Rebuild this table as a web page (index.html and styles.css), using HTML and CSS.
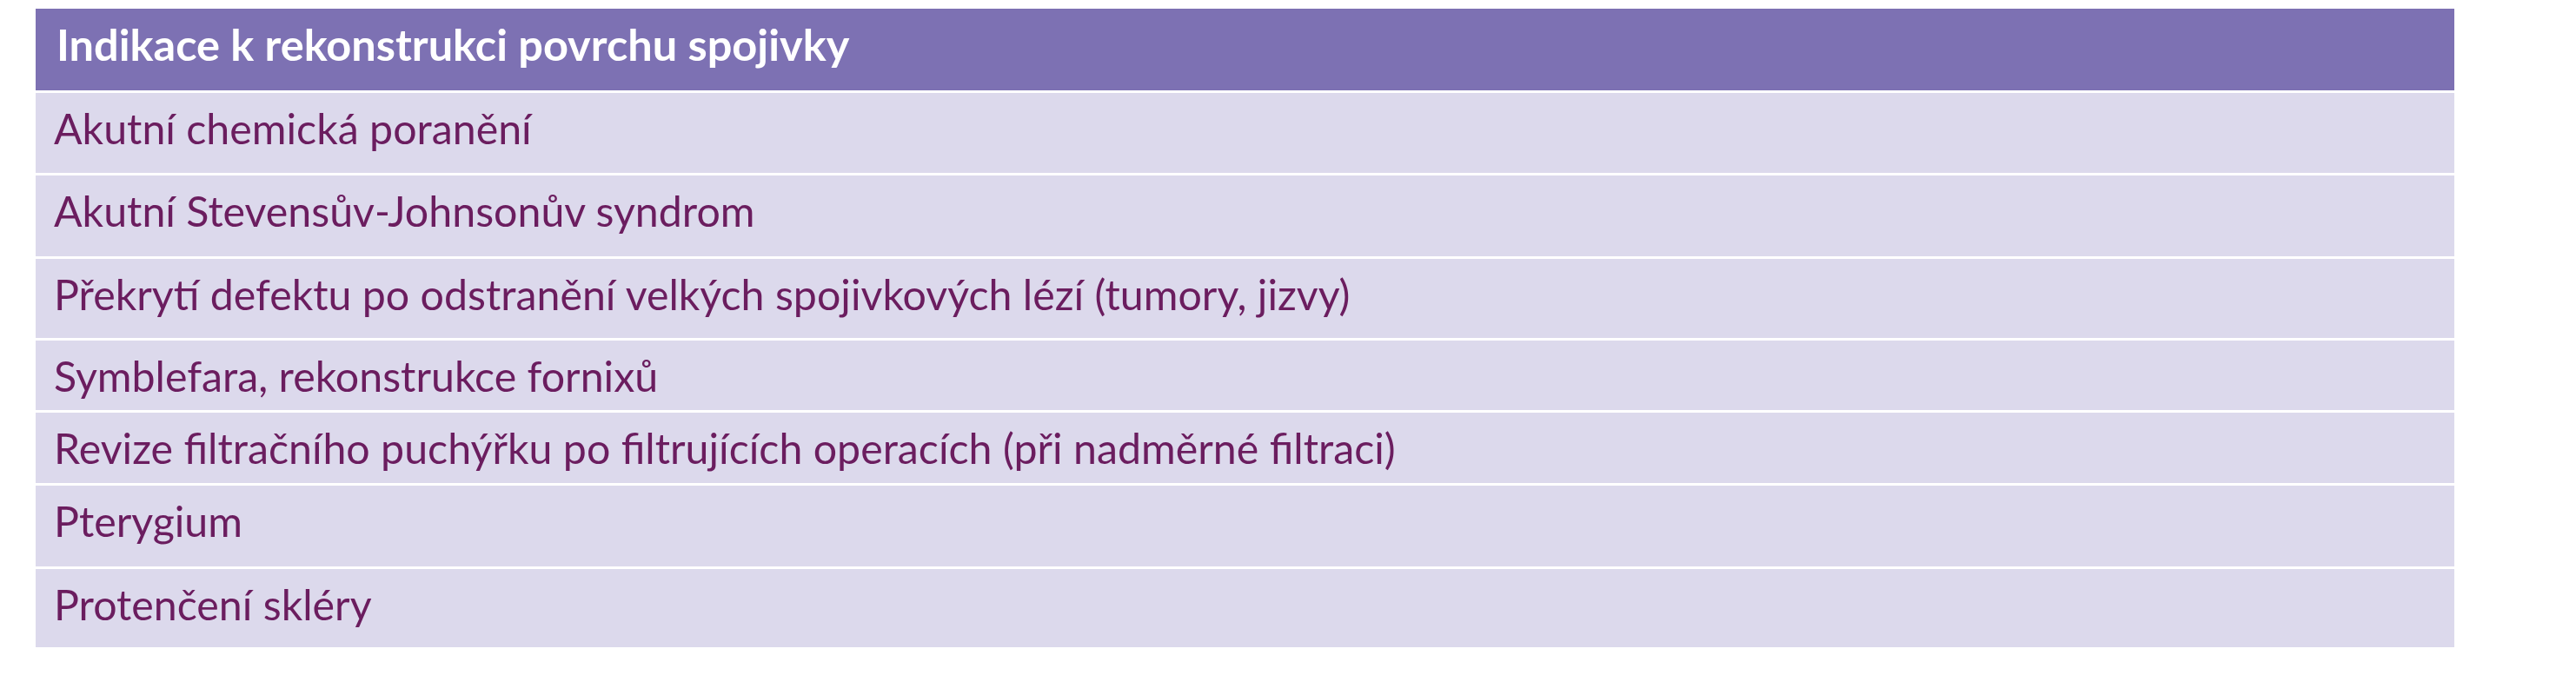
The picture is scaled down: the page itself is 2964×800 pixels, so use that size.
FILE: index.html
```html
<!DOCTYPE html>
<html lang="cs">
<head>
<meta charset="utf-8">
<title>Indikace k rekonstrukci povrchu spojivky</title>
<link rel="stylesheet" href="styles.css">
</head>
<body>
<div class="table">
  <div class="row head">Indikace k rekonstrukci povrchu spojivky</div>
  <div class="row h92">Akutní chemická poranění</div>
  <div class="row h93">Akutní Stevensův-Johnsonův syndrom</div>
  <div class="row h91">Překrytí defektu po odstranění velkých spojivkových lézí (tumory, jizvy)</div>
  <div class="row h80">Symblefara, rekonstrukce fornixů</div>
  <div class="row h81">Revize filtračního puchýřku po filtrujících operacích (při nadměrné filtraci)</div>
  <div class="row h93">Pterygium</div>
  <div class="row h90">Protenčení skléry</div>
</div>
</body>
</html>
```
FILE: styles.css
```css
html, body {
  margin: 0;
  padding: 0;
  background: #ffffff;
}

.table {
  display: flex;
  flex-direction: column;
  gap: 3px;
  width: 2783px;
  margin: 10px 0 0 41px;
  font-family: Lato, "Open Sans", sans-serif;
  font-size: 48.3px;
  line-height: 58px;
}

.row {
  box-sizing: border-box;
  padding: 11px 0 0 21px;
  background: #dcd9ec;
  color: #6b1d5f;
  white-space: nowrap;
}

.head {
  height: 94px;
  padding-top: 12px;
  padding-left: 24px;
  background: #7d71b3;
  color: #ffffff;
  font-size: 50.5px;
  font-weight: 700;
}

.h80 { height: 80px; }
.h81 { height: 81px; }
.h90 { height: 90px; }
.h91 { height: 91px; }
.h92 { height: 92px; }
.h93 { height: 93px; }
```
